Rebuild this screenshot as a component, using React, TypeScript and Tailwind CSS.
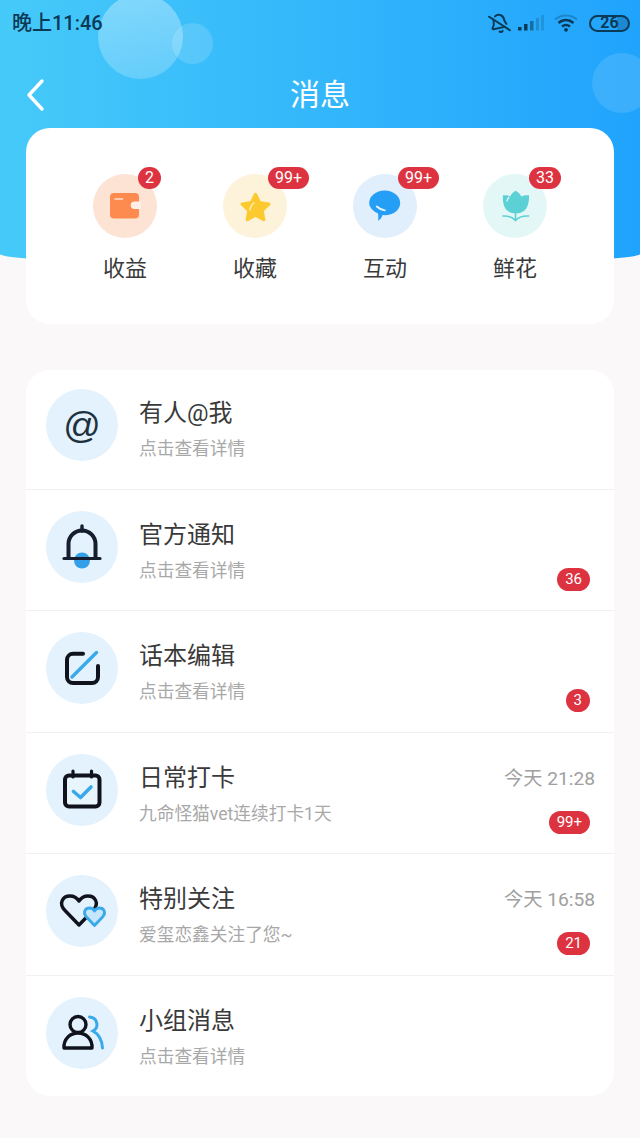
import React from "react";
import { BellOff } from "lucide-react";

const ink = "#161d2e";
const blue = "#3aa9ea";

function Badge({ text, className = "" }: { text: string; className?: string }) {
  return (
    <span className={`flex items-center justify-center rounded-full bg-[#dd3340] leading-none text-white ${className}`}>
      {text}
    </span>
  );
}

const WalletIcon = (
  <svg width="64" height="64" viewBox="0 0 64 64">
    <rect x="17" y="19" width="29" height="25.500" rx="4" fill="#fd8b4f" />
    <path d="M48 27.500h-6.500a3.700 3.700 0 0 0 0 7.500H48z" fill="#fdeee6" />
    <path d="M22 25h7.500" stroke="#ffe2d0" strokeWidth="1.600" strokeLinecap="round" />
  </svg>
);
const StarIcon = (
  <svg width="64" height="64" viewBox="0 0 64 64">
    <path d="M32.500 20.500l4 8.300 9.300 1.300-6.800 6.400 1.700 9-8.200-4.400-8.200 4.400 1.700-9-6.800-6.400 9.300-1.300z" fill="#fcc92f" stroke="#fcc92f" strokeWidth="3.400" strokeLinejoin="round" />
    <path d="M27 36c.3-3 1.600-5.300 4-7" fill="none" stroke="#fff2c4" strokeWidth="1.300" strokeLinecap="round" />
  </svg>
);
const ChatIcon = (
  <svg width="64" height="64" viewBox="0 0 64 64">
    <path d="M31.700 16.500c8.600 0 15.500 5.600 15.500 12.400s-6.900 12.300-15.500 12.300c-.8 0-1.200 0-2-.1-1 2.600-2.500 4.700-4.700 5.600.5-2.300.4-4.300 0-7.300C19.900 37 16.200 33.300 16.200 28.900c0-6.800 6.900-12.400 15.500-12.400z" fill="#259ff6" />
    <path d="M23.800 32.500c2 1.900 4.800 3.300 8 3.800" fill="none" stroke="#eaf7ff" strokeWidth="1.800" strokeLinecap="round" />
  </svg>
);
const TulipIcon = (
  <svg width="64" height="64" viewBox="0 0 64 64">
    <path d="M32.500 16.800c2.600 1.300 4.700 3.400 5.800 5.700 1.900-1 4.700-1.500 7.700-1.200.3 6.800-1.300 13.200-5.600 16-4.500 3-10.800 3-15.200 0-4.200-2.800-5.800-9.200-5.200-16 2.600-.3 5.300.2 7.100 1.200 1.200-2.300 3-4.300 5.400-5.700z" fill="#5cd1d5" />
    <path d="M32.500 37v9M20 42c5-.3 9.500 1 12.500 4.500 3-3.500 8-4.800 13-4.500" fill="none" stroke="#5cd1d5" strokeWidth="1.600" strokeLinecap="round" />
    <path d="M24 27c.2-1.500.8-2.600 1.800-3.500" fill="none" stroke="#dffafa" strokeWidth="1.300" strokeLinecap="round" />
  </svg>
);

const BellIcon = (
  <svg width="72" height="72" viewBox="0 0 72 72" fill="none">
    <circle cx="36" cy="49.500" r="8" fill="#349fe9" />
    <path d="M22.500 46V33a13.500 13.500 0 0 1 27 0v13" stroke={ink} strokeWidth="4" />
    <path d="M36 15v5" stroke={ink} strokeWidth="3.400" strokeLinecap="round" />
    <path d="M18 47.500h36" stroke={ink} strokeWidth="3.200" strokeLinecap="round" />
  </svg>
);
const EditIcon = (
  <svg width="72" height="72" viewBox="0 0 72 72" fill="none">
    <path d="M37 21.800H27a6 6 0 0 0-6 6V45a6 6 0 0 0 6 6h19a6 6 0 0 0 6-6V34" stroke="#10131c" strokeWidth="4" strokeLinecap="round" />
    <path d="M26 45l24.500-24.500" stroke={blue} strokeWidth="3.400" strokeLinecap="round" />
  </svg>
);
const CalIcon = (
  <svg width="72" height="72" viewBox="0 0 72 72" fill="none">
    <rect x="19" y="21.500" width="34.500" height="31" rx="4" fill="#e9f5fd" stroke="#10131c" strokeWidth="4" />
    <path d="M27 17v6M45.500 17v6" stroke="#10131c" strokeWidth="3.200" strokeLinecap="round" />
    <path d="M27.500 37.500l7 6 10.500-10.500" stroke={blue} strokeWidth="3.600" strokeLinecap="round" strokeLinejoin="round" />
  </svg>
);
const HeartIcon = (
  <svg width="72" height="72" viewBox="0 0 72 72" fill="none">
    <path d="M33 50L19 35.500C12 28 17 21 24 21c4 0 7 2 9 5 2-3 5-5 9-5 7 0 11.500 7 5.500 14z" stroke="#10131c" strokeWidth="3.400" strokeLinejoin="round" />
    <path d="M48.500 50.500L40 41.500c-3.500-4.500-.5-8.500 3.500-8.500 2 0 4 1 5 3 1-2 3-3 5-3 4 0 7 4 3.500 8.500z" fill="#c5e7fb" stroke={blue} strokeWidth="2.800" strokeLinejoin="round" />
  </svg>
);
const PeopleIcon = (
  <svg width="72" height="72" viewBox="0 0 72 72" fill="none">
    <circle cx="32" cy="27.500" r="8" stroke="#10131c" strokeWidth="3.400" />
    <path d="M18 51c-.5-9 6-15 14-15s14.500 6 14 15z" stroke="#10131c" strokeWidth="3.400" strokeLinejoin="round" />
    <path d="M43.500 20c8 .5 10 10.500 3.500 14 5.500 3 9 9 9.500 17" stroke={blue} strokeWidth="3" strokeLinecap="round" />
  </svg>
);

const tops = [
  { label: "收益", badge: "2", bg: "bg-[#fde3d4]", left: "left-[45px]", icon: WalletIcon },
  { label: "收藏", badge: "99+", bg: "bg-[#fdf3da]", left: "left-[45px]", icon: StarIcon },
  { label: "互动", badge: "99+", bg: "bg-[#e1eefc]", left: "left-[45px]", icon: ChatIcon },
  { label: "鲜花", badge: "33", bg: "bg-[#e3f8f6]", left: "left-[46px]", icon: TulipIcon },
];

const rows: { title: string; sub: string; icon: React.ReactNode; time?: string; badge?: string; cls: string }[] = [
  {
    title: "有人@我",
    sub: "点击查看详情",
    cls: "h-[119.500px] pt-[19px]",
    icon: <span className="font-['Liberation_Sans'] text-[37px] leading-none text-[#1d3140]">@</span>,
  },
  { title: "官方通知", sub: "点击查看详情", badge: "36", cls: "h-[121.500px] pt-[21px]", icon: BellIcon },
  { title: "话本编辑", sub: "点击查看详情", badge: "3", cls: "h-[121.500px] pt-[21px]", icon: EditIcon },
  { title: "日常打卡", sub: "九命怪猫vet连续打卡1天", time: "今天 21:28", badge: "99+", cls: "h-[121.500px] pt-[21px]", icon: CalIcon },
  { title: "特别关注", sub: "爱玺恋鑫关注了您~", time: "今天 16:58", badge: "21", cls: "h-[121.500px] pt-[21px]", icon: HeartIcon },
  { title: "小组消息", sub: "点击查看详情", cls: "h-[120px] pt-[21px]", icon: PeopleIcon },
];

export default function App() {
  return (
    <div
      className="h-[1138px] w-[640px] overflow-hidden bg-[#faf8f9]"
      style={{ fontFamily: 'Roboto, "Noto Sans CJK SC", sans-serif' }}
    >
      <header className="relative h-[265px] overflow-hidden rounded-b-[320px_11px] bg-gradient-to-r from-[#46caf9] to-[#20a3fc]">
        <div className="absolute left-[98px] top-[-6px] h-[85px] w-[85px] rounded-full bg-gradient-to-b from-white/35 to-white/20" />
        <div className="absolute left-[172px] top-[23px] h-[41px] w-[41px] rounded-full bg-white/15" />
        <div className="absolute left-[592px] top-[53px] h-[60px] w-[60px] rounded-full bg-white/12" />

        <div className="relative flex h-[46px] items-center justify-between pl-[12px] pr-[10px] text-[#0b3a56]">
          <span className="text-[20px] font-medium leading-none">晚上11:46</span>
          <div className="flex items-center">
            <BellOff size={21} strokeWidth={2.300} className="-rotate-12" />
            <svg width="26" height="16" viewBox="0 0 26 16" className="ml-[8px]">
              <rect x="0" y="12" width="3.500" height="3.500" fill="#0b3a56" />
              <rect x="6" y="9" width="3.500" height="6.500" fill="#0b3a56" />
              <rect x="12" y="6" width="3.500" height="9.500" fill="#0b3a56" opacity=".55" />
              <rect x="18" y="3" width="3" height="12.500" fill="#0b3a56" opacity=".25" />
              <rect x="23" y="0" width="3" height="15.500" fill="#0b3a56" opacity=".2" />
            </svg>
            <svg width="24" height="18" viewBox="0 0 24 18" fill="none" className="ml-[10px]">
              <path d="M1 5.500c6-5.500 16-5.500 22 0" stroke="#0b3a56" strokeWidth="2" opacity=".3" />
              <path d="M4.500 9c4.500-4 10.500-4 15 0" stroke="#0b3a56" strokeWidth="2.400" />
              <path d="M8 12.500c2.500-2 5.500-2 8 0" stroke="#0b3a56" strokeWidth="2.400" />
              <circle cx="12" cy="15.800" r="1.900" fill="#0b3a56" />
            </svg>
            <span className="ml-[11px] flex h-[17px] w-[41px] items-center justify-center rounded-full border-2 border-[#0b3a56] bg-gradient-to-r from-transparent from-70% to-[#0b3a56]/25 to-70% text-[16px] font-bold leading-none">
              26
            </span>
          </div>
        </div>

        <div className="relative mt-[17px] flex h-[64px] items-center justify-center">
          <svg width="20" height="34" viewBox="0 0 20 34" fill="none" className="absolute left-[25px] top-[15px]">
            <path d="M17 3L4 17l13 14" stroke="#fff" strokeWidth="3.400" strokeLinecap="round" strokeLinejoin="round" />
          </svg>
          <h1 className="text-[30px] font-normal leading-none text-white">消息</h1>
        </div>
      </header>

      <main className="relative mx-[26px] mt-[-137px]">
        <section className="grid h-[196px] grid-cols-4 rounded-[24px] bg-white px-[34px] pt-[46px]">
          {tops.map((t) => (
            <div key={t.label} className="flex flex-col items-center">
              <div className={`relative h-[64px] w-[64px] rounded-full ${t.bg}`}>
                {t.icon}
                <Badge text={t.badge} className={`absolute top-[-7px] h-[22px] min-w-[22px] px-[7px] text-[16px] ${t.left}`} />
              </div>
              <span className="mt-[16px] text-[22px] leading-[30px] text-[#3a3a3a]">{t.label}</span>
            </div>
          ))}
        </section>

        <section className="mt-[46px] flex flex-col rounded-[24px] bg-white">
          {rows.map((r, i) => (
            <div
              key={r.title}
              className={`flex items-start pl-[20px] pr-[19px] ${r.cls} ${i < rows.length - 1 ? "border-b border-[#f0f0f0]" : ""}`}
            >
              <div className="flex h-[72px] w-[72px] shrink-0 items-center justify-center rounded-full bg-[#e3f2fc]">
                {r.icon}
              </div>
              <div className="ml-[21px] flex flex-col pt-[8px]">
                <span className="text-[24px] leading-[32px] text-[#3a3a3a]">{r.title}</span>
                <span className="mt-[8px] text-[17.700px] leading-[24px] text-[#a8a8a8]">{r.sub}</span>
              </div>
              <div className="ml-auto flex h-[80px] flex-col items-end">
                {r.time && <span className="mt-[11px] text-[19.200px] leading-[28px] text-[#a0a0a0]">{r.time}</span>}
                {r.badge && <Badge text={r.badge} className="mr-[5px] mt-auto h-[23px] min-w-[24px] px-[8px] text-[15px]" />}
              </div>
            </div>
          ))}
        </section>
      </main>
    </div>
  );
}
